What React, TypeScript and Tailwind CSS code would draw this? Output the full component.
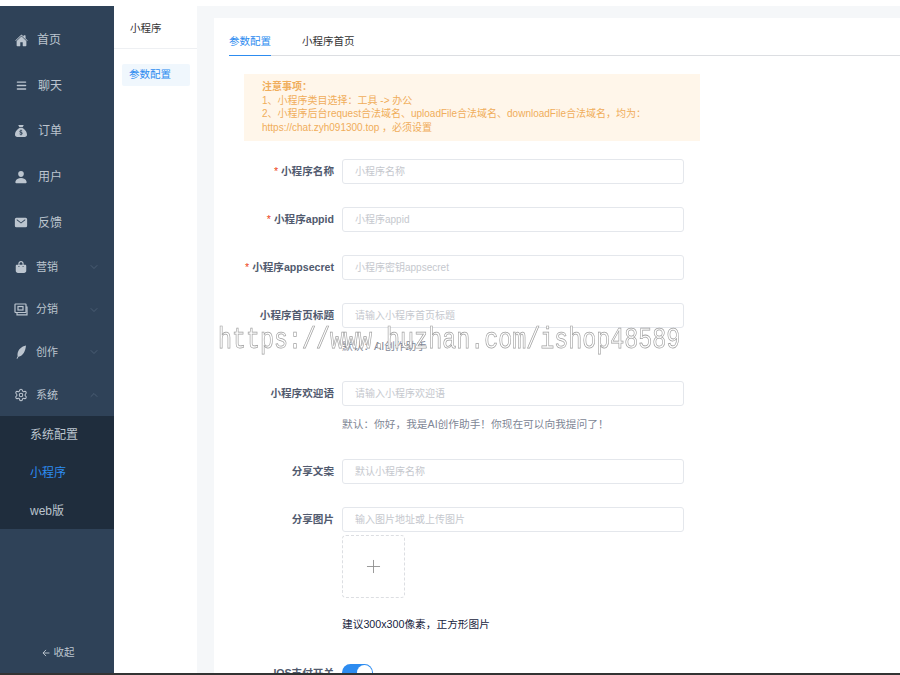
import { ChevronDown, ChevronUp, Plus, Settings } from "lucide-react";
import type { ReactNode } from "react";
import { FaBagShopping, FaBars, FaSackDollar } from "react-icons/fa6";
import { IoArrowBack, IoHome, IoMail, IoPerson } from "react-icons/io5";

const fontStack = "font-['Liberation_Sans','Noto_Sans_CJK_SC',sans-serif]";

function PhotosIcon() {
  return (
    <svg width="14" height="13" viewBox="0 0 14 13" fill="none" stroke="currentColor" strokeWidth="1.2">
      <rect x="1" y="1" width="11" height="8.5" rx="0.5" />
      <path d="M3 9.8v2h10V4h-1" />
      <rect x="4" y="3.5" width="5" height="3.5" />
    </svg>
  );
}

function QuillIcon() {
  return (
    <svg width="12" height="14" viewBox="0 0 12 14" fill="currentColor">
      <path d="M11 0.5C6.5 1.5 3 4.5 2.5 9c-.1 1 0 1.8.2 2.3L1.5 13.5l.9.3 1.1-2C8 11 10.5 6 11 .5z" />
    </svg>
  );
}

const topItems = [
  { label: "首页", icon: <IoHome size={13} />, textClass: "ml-[9px]" },
  { label: "聊天", icon: <FaBars size={11} />, textClass: "ml-[10px]" },
  { label: "订单", icon: <FaSackDollar size={12} />, textClass: "ml-[10px]" },
  { label: "用户", icon: <IoPerson size={14} />, textClass: "ml-[10px]" },
  { label: "反馈", icon: <IoMail size={15} />, textClass: "ml-[10px]" },
];

const groupItems = [
  { label: "营销", icon: <FaBagShopping size={12} />, open: false },
  { label: "分销", icon: <PhotosIcon />, open: false },
  { label: "创作", icon: <QuillIcon />, open: false },
  { label: "系统", icon: <Settings size={14} strokeWidth={1.8} />, open: true },
];

function Sidebar() {
  return (
    <aside className="w-[114px] shrink-0 bg-[#2f4258] text-[#bcc5cf] flex flex-col pt-[11.5px]">
      {topItems.map((item) => (
        <div key={item.label} className="h-[45.6px] flex items-center pl-[14px] text-[12px]">
          <span className="w-[14px] flex justify-center">{item.icon}</span>
          <span className={item.textClass}>{item.label}</span>
        </div>
      ))}
      {groupItems.map((item) => (
        <div key={item.label} className="h-[42.7px] flex items-center pl-[14px] pr-[14px] text-[11px]">
          <span className="w-[14px] flex justify-center">{item.icon}</span>
          <span className="ml-[8px] flex-1">{item.label}</span>
          {item.open ? (
            <ChevronUp size={12} strokeWidth={1} className="text-[#64778c]" />
          ) : (
            <ChevronDown size={12} strokeWidth={1} className="text-[#64778c]" />
          )}
        </div>
      ))}
      <div className="bg-[#1f2d3d] h-[113px] pl-[30px] text-[12px] flex flex-col">
        <div className="h-[38px] flex items-center">系统配置</div>
        <div className="h-[38px] flex items-center text-[#2d8cf0]">小程序</div>
        <div className="h-[37px] flex items-center">web版</div>
      </div>
      <div className="mt-auto mb-[12px] flex items-center justify-center gap-[3px] text-[10.5px] pl-[1px]">
        <IoArrowBack size={10} />
        <span>收起</span>
      </div>
    </aside>
  );
}

function SubNav() {
  return (
    <nav className="w-[83px] shrink-0 bg-white flex flex-col">
      <div className="h-[43px] border-b border-[#eef0f3] pl-[16px] pt-[3px] flex items-center text-[10.5px] text-[#333]">小程序</div>
      <div className="mt-[15px] ml-[8px] w-[68px] h-[22px] bg-[#f0f7fd] rounded-[2px] pl-[7px] flex items-center text-[10.5px] text-[#2d8cf0]">
        参数配置
      </div>
    </nav>
  );
}

function FormRow({ label, required, placeholder, children }: { label: string; required?: boolean; placeholder?: string; children?: ReactNode }) {
  return (
    <div className="flex mb-[23px]">
      <div className="w-[120px] h-[25px] pt-[1px] flex items-center justify-end text-[10.6px] font-bold text-[#515a6e] whitespace-nowrap">
        {required && <span className="text-[#ed4014] mr-[3px] font-normal">*</span>}
        {label}
      </div>
      <div className="ml-[8px] w-[342px]">
        <div className="h-[25px] border border-[#e4e7ec] rounded-[3px] pl-[12px] flex items-center text-[10px] text-[#c5c8ce] bg-white">
          {placeholder}
        </div>
        {children}
      </div>
    </div>
  );
}

function Hint({ text }: { text: string }) {
  return <div className="h-[30px] pt-[8px] leading-[20px] text-[10.7px] text-[#808695] whitespace-nowrap">{text}</div>;
}

function MiniProgramForm() {
  return (
    <section className="flex-1 bg-white mt-[12px] min-w-0">
      <div className="h-[37.5px] ml-[15px] border-b border-[#dcdee2] flex text-[10.5px]">
        <div className="h-[37.5px] w-[42px] border-b-[1.5px] border-[#2d8cf0] text-[#2d8cf0] pt-[16px] leading-[14px] whitespace-nowrap">参数配置</div>
        <div className="ml-[31px] pt-[16px] leading-[14px] text-[#333] whitespace-nowrap">小程序首页</div>
      </div>
      <div className="mt-[18.5px] ml-[30px] w-[456px] h-[67px] bg-[#fff6ea] pl-[18px] pt-[6px] text-[10px] leading-[13.5px] text-[#f0ad5a] whitespace-nowrap">
        <div className="font-bold">注意事项：</div>
        <div>1、小程序类目选择：工具 -&gt; 办公</div>
        <div>2、小程序后台request合法域名、uploadFile合法域名、downloadFile合法域名，均为：</div>
        <div>https://chat.zyh091300.top ，必须设置</div>
      </div>
      <div className="mt-[18px]">
        <FormRow required label="小程序名称" placeholder="小程序名称" />
        <FormRow required label="小程序appid" placeholder="小程序appid" />
        <FormRow required label="小程序appsecret" placeholder="小程序密钥appsecret" />
        <FormRow label="小程序首页标题" placeholder="请输入小程序首页标题">
          <Hint text="默认：AI创作助手" />
        </FormRow>
        <FormRow label="小程序欢迎语" placeholder="请输入小程序欢迎语">
          <Hint text="默认：你好，我是AI创作助手！你现在可以向我提问了！" />
        </FormRow>
        <FormRow label="分享文案" placeholder="默认小程序名称" />
        <FormRow label="分享图片" placeholder="输入图片地址或上传图片">
          <div className="mt-[3px] w-[63px] h-[63px] border border-dashed border-[#dcdee2] rounded-[4px] flex items-center justify-center text-[#8d8d8d]">
            <Plus size={21} strokeWidth={1} />
          </div>
          <div className="mt-[19px] h-[14px] leading-[14px] text-[10.7px] text-[#17233d] whitespace-nowrap">建议300x300像素，正方形图片</div>
        </FormRow>
        <div className="flex mt-[33px]">
          <div className="w-[120px] h-[17px] flex items-center justify-end text-[10.6px] font-bold text-[#515a6e] pt-[3px] whitespace-nowrap">IOS支付开关</div>
          <div className="ml-[8px] w-[31px] h-[17px] rounded-full bg-[#2d8cf0] flex items-center justify-end pr-[1px]">
            <div className="w-[15px] h-[15px] rounded-full bg-white" />
          </div>
        </div>
      </div>
    </section>
  );
}

export default function App() {
  return (
    <div className={`relative w-[900px] h-[675px] overflow-hidden flex flex-col bg-white ${fontStack}`}>
      <div className="h-[6px] shrink-0 bg-white" />
      <div className="flex-1 min-h-0 flex bg-[#f5f7f9] overflow-hidden">
        <Sidebar />
        <SubNav />
        <div className="w-[17px] shrink-0 bg-[#f5f7f9]" />
        <MiniProgramForm />
      </div>
      <div className="h-[2px] shrink-0 bg-[#333] relative z-10" />
      {/* outlined site stamp running across the form */}
      <div className="absolute left-[218px] top-[324px] text-[23.35px] leading-[32px] scale-y-[1.25] [will-change:transform] font-['Liberation_Mono',monospace] text-white [-webkit-text-stroke:0.6px_#a0a0a0] whitespace-nowrap pointer-events-none">
        https://www.huzhan.com/ishop48589
      </div>
    </div>
  );
}
